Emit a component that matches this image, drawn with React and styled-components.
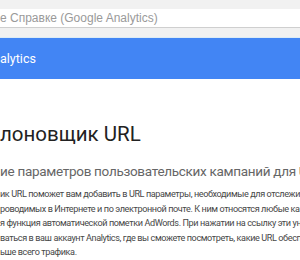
import React from 'react';
import styled, { createGlobalStyle } from 'styled-components';

const GlobalStyle = createGlobalStyle`
  html, body {
    margin: 0;
    padding: 0;
    background: #fff;
    overflow: hidden;
  }
`;

const Page = styled.div`
  width: 300px;
  height: 260px;
  overflow: hidden;
  font-family: Roboto, 'Liberation Sans', Arial, sans-serif;
`;

const TopBar = styled.div`
  background: #f1f1f1;
  padding: 9px 0 9px;
  border-bottom: 1px solid #dcecf6;
`;

const SearchBox = styled.div`
  height: 18px;
  background: #fff;
  border-bottom: 1px solid #cfcfcf;
  display: flex;
  align-items: center;
  font-family: 'Liberation Sans', Arial, sans-serif;
  font-size: 12px;
  color: #9a9a9a;
  white-space: nowrap;
`;

const Header = styled.div`
  height: 41px;
  background: #4285f4;
  display: flex;
  align-items: center;
  color: #fff;
  font-size: 12.5px;
  white-space: nowrap;
`;

const Main = styled.div`
  padding-top: 41px;
  white-space: nowrap;
`;

const Title = styled.h1`
  margin: 0;
  font-size: 20.5px;
  font-weight: 400;
  color: #222;
  line-height: 28px;
`;

const Subtitle = styled.h2`
  margin: 12px 0 0;
  font-size: 13.5px;
  letter-spacing: -0.3px;
  font-weight: 400;
  color: #666;
  line-height: 22px;
`;

const Body = styled.p`
  margin: 5px 0 0;
  font-size: 9.1px;
  letter-spacing: -0.4px;
  line-height: 14.5px;
  color: #474747;
`;

const Line = styled.span`
  display: block;
`;

const lines = [
  'ик URL поможет вам добавить в URL параметры, необходимые для отслеживания',
  'роводимых в Интернете и по электронной почте. К ним относятся любые кампании',
  'я функция автоматической пометки AdWords. При нажатии на ссылку эти уникальные',
  'ваться в ваш аккаунт Analytics, где вы сможете посмотреть, какие URL обеспечивают',
  'ьше всего трафика.',
];

export default function App() {
  return (
    <>
      <GlobalStyle />
      <Page>
        <TopBar>
          <SearchBox>е Справке (Google Analytics)</SearchBox>
        </TopBar>
        <Header>alytics</Header>
        <Main>
          <Title>лоновщик URL</Title>
          <Subtitle>ие параметров пользовательских кампаний для URL</Subtitle>
          <Body>
            {lines.map((l, i) => (
              <Line key={i}>{l}</Line>
            ))}
          </Body>
        </Main>
      </Page>
    </>
  );
}
